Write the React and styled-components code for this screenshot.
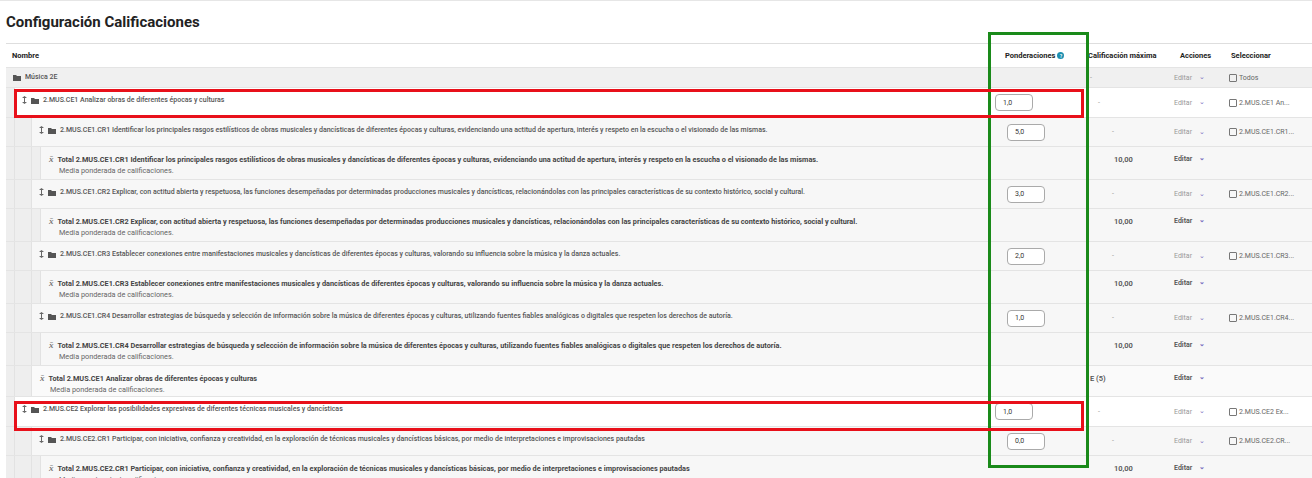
import styled, { createGlobalStyle } from "styled-components";

const Global = createGlobalStyle`
  body { margin: 0; background: #fff; font-family: Roboto, "Liberation Sans", sans-serif; color: #333; }
`;

const Page = styled.div`
  position: relative;
  width: 1312px;
  height: 478px;
  overflow: hidden;
  border-top: 1px solid #e6e6e6;
`;

const Title = styled.h2`
  margin: 0;
  padding: 12px 6px 0;
  height: 30px;
  font-size: 15px;
  font-weight: 700;
  color: #222;
`;

const Table = styled.div`
  margin-left: 6px;
  border-top: 1px solid #dedede;
`;

const Row = styled.div`
  display: grid;
  grid-template-columns: 979px 103px 82px 55px 87px;
  height: ${(p) => p.h}px;
  background: ${(p) => p.bg || "#fff"};
  border-bottom: 1px solid #e4e4e4;
  font-size: 7px;
  color: #555;
`;

const HeadRow = styled(Row)`
  height: 23px;
  align-items: center;
  background: #fff;
`;

const NameCell = styled.div`
  display: flex;
  height: 100%;
  min-width: 0;
`;

const Gutter = styled.div`
  flex: 0 0 ${(p) => p.w}px;
  background: #eeeeee;
  border-right: 1px solid #e2e2e2;
`;

const NameBody = styled.div`
  flex: 1;
  display: flex;
  flex-direction: column;
  padding: ${(p) => (p.total ? "7px 0 0 8px" : "8px 0 0 7px")};
  white-space: nowrap;
  overflow: hidden;
`;

const Line = styled.div`
  display: flex;
  align-items: center;
  gap: 4px;
  font-size: ${(p) => (p.total ? "7.3px" : "7px")};
  font-weight: ${(p) => (p.total ? 700 : 500)};
  color: ${(p) => (p.total ? "#444" : "#555")};
`;

const Sub = styled.div`
  font-size: 7.3px;
  color: #666;
  margin: 2px 0 0 10px;
`;

const Cell = styled.div`
  display: flex;
  align-items: ${(p) => (p.top ? "flex-start" : "center")};
  justify-content: flex-start;
  padding-top: ${(p) => (p.top ? 8 : 0)}px;
  padding-left: ${(p) => p.pl || 0}px;
  font-size: ${(p) => p.fs || 7}px;
  font-weight: ${(p) => p.fw || 400};
  color: ${(p) => p.color || "#999"};
  white-space: nowrap;
`;

const Input = styled.div`
  width: 38px;
  height: 17px;
  box-sizing: border-box;
  border: 1px solid #aaa;
  border-radius: 4px;
  background: #fff;
  font-size: 7px;
  color: #333;
  display: flex;
  align-items: center;
  padding-left: 7px;
  margin-left: ${(p) => p.ml}px;
`;

const Caret = styled.span`
  color: #7a6fc0;
  font-size: 7px;
  margin-left: 7px;
  line-height: 1;
`;

const Box = styled.span`
  display: inline-block;
  width: 6px;
  height: 6px;
  border: 1px solid #777;
  border-radius: 1px;
  margin-right: 2px;
`;

const Help = styled.span`
  display: inline-flex;
  width: 7px;
  height: 7px;
  border-radius: 50%;
  background: #1c8fb0;
  color: #fff;
  font-size: 5px;
  align-items: center;
  justify-content: center;
  margin-left: 2px;
`;

const Mark = styled.div`
  position: absolute;
  left: ${(p) => p.x}px;
  top: ${(p) => p.y}px;
  width: ${(p) => p.w}px;
  height: ${(p) => p.h}px;
  border: 3px solid ${(p) => p.c};
  box-sizing: border-box;
  pointer-events: none;
`;

const Folder = () => (
  <svg width="8" height="7" viewBox="0 0 8 7">
    <path d="M0 1h3l1 1h4v5H0z" fill="#555" />
  </svg>
);
const Move = () => (
  <svg width="5" height="8" viewBox="0 0 5 8">
    <path d="M2.5 0L5 2H3v4h2L2.5 8 0 6h2V2H0z" fill="#666" />
  </svg>
);
const Calc = () => (
  <span style={{ fontFamily: "'Liberation Serif', serif", fontStyle: "italic", fontSize: 9, color: "#777" }}>x̄</span>
);

const CR = [
  ["2.MUS.CE1.CR1 Identificar los principales rasgos estilísticos de obras musicales y dancísticas de diferentes épocas y culturas, evidenciando una actitud de apertura, interés y respeto en la escucha o el visionado de las mismas.", "5,0"],
  ["2.MUS.CE1.CR2 Explicar, con actitud abierta y respetuosa, las funciones desempeñadas por determinadas producciones musicales y dancísticas, relacionándolas con las principales características de su contexto histórico, social y cultural.", "3,0"],
  ["2.MUS.CE1.CR3 Establecer conexiones entre manifestaciones musicales y dancísticas de diferentes épocas y culturas, valorando su influencia sobre la música y la danza actuales.", "2,0"],
  ["2.MUS.CE1.CR4 Desarrollar estrategias de búsqueda y selección de información sobre la música de diferentes épocas y culturas, utilizando fuentes fiables analógicas o digitales que respeten los derechos de autoría.", "1,0"],
];

const HeadText = styled(Cell)`
  font-size: 7.5px;
  font-weight: 700;
  color: #222;
`;

const Actions = () => (
  <Cell pl={4}>Editar<Caret>⌄</Caret></Cell>
);

const ItemRow = ({ gutters, text, value, ml, sel, bg, h = 28 }) => (
  <Row h={h} bg={bg}>
    <NameCell>
      {gutters.map((w, i) => <Gutter key={i} w={w} />)}
      <NameBody>
        <Line><Move /><Folder />{text}</Line>
      </NameBody>
    </NameCell>
    <Cell><Input ml={ml}>{value}</Input></Cell>
    <Cell pl={ml > 15 ? 24 : 10}>-</Cell>
    <Actions />
    <Cell pl={4} color="#666"><Box />{sel}</Cell>
  </Row>
);

const TotalRow = ({ gutters, text, max, bg = "#f7f7f7", h = 32 }) => (
  <Row h={h} bg={bg}>
    <NameCell>
      {gutters.map((w, i) => <Gutter key={i} w={w} />)}
      <NameBody total>
        <Line total><Calc />{text}</Line>
        <Sub>Media ponderada de calificaciones.</Sub>
      </NameBody>
    </NameCell>
    <Cell />
    <Cell top pl={max === "E (5)" ? 2 : 26} fs={7.5} fw={600} color="#555">{max}</Cell>
    <Cell top pl={4} color="#555" fw={600}>Editar<Caret>⌄</Caret></Cell>
    <Cell />
  </Row>
);

export default function App() {
  return (
    <Page>
      <Global />
      <Title>Configuración Calificaciones</Title>
      <Table>
        <HeadRow>
          <HeadText pl={6}>Nombre</HeadText>
          <HeadText pl={20}>Ponderaciones<Help>?</Help></HeadText>
          <HeadText>Calificación máxima</HeadText>
          <HeadText pl={10}>Acciones</HeadText>
          <HeadText pl={6}>Seleccionar</HeadText>
        </HeadRow>
        <Row h={19} bg="#f0f0f0">
          <NameCell>
            <NameBody style={{ paddingTop: 5 }}>
              <Line><Folder />Música 2E</Line>
            </NameBody>
          </NameCell>
          <Cell />
          <Cell pl={2}>-</Cell>
          <Actions />
          <Cell pl={4} color="#666"><Box />Todos</Cell>
        </Row>
        <ItemRow gutters={[8]} text="2.MUS.CE1 Analizar obras de diferentes épocas y culturas" value="1,0" ml={10} sel="2.MUS.CE1 An..." h={29} />
        {CR.map(([t, v]) => (
          <div key={t}>
            <ItemRow gutters={[8, 16]} text={t} value={v} ml={22} sel={t.slice(0, 13) + "..."} bg="#f7f7f7" />
            <TotalRow gutters={[8, 16, 8]} text={"Total " + t} max="10,00" />
          </div>
        ))}
        <TotalRow gutters={[8, 16]} text="Total 2.MUS.CE1 Analizar obras de diferentes épocas y culturas" max="E (5)" bg="#fafafa" h={30} />
        <ItemRow gutters={[8]} text="2.MUS.CE2 Explorar las posibilidades expresivas de diferentes técnicas musicales y dancísticas" value="1,0" ml={10} sel="2.MUS.CE2 Ex..." h={29} />
        <ItemRow gutters={[8, 16]} text="2.MUS.CE2.CR1 Participar, con iniciativa, confianza y creatividad, en la exploración de técnicas musicales y dancísticas básicas, por medio de interpretaciones e improvisaciones pautadas" value="0,0" ml={22} sel="2.MUS.CE2.CR..." bg="#f7f7f7" />
        <TotalRow gutters={[8, 16, 8]} text="Total 2.MUS.CE2.CR1 Participar, con iniciativa, confianza y creatividad, en la exploración de técnicas musicales y dancísticas básicas, por medio de interpretaciones e improvisaciones pautadas" max="10,00" />
      </Table>
      <Mark x={988} y={31} w={101} h={436} c="#1a8a1a" />
      <Mark x={14} y={88} w={1070} h={29} c="#e8101a" />
      <Mark x={14} y={400} w={1070} h={30} c="#e8101a" />
    </Page>
  );
}
